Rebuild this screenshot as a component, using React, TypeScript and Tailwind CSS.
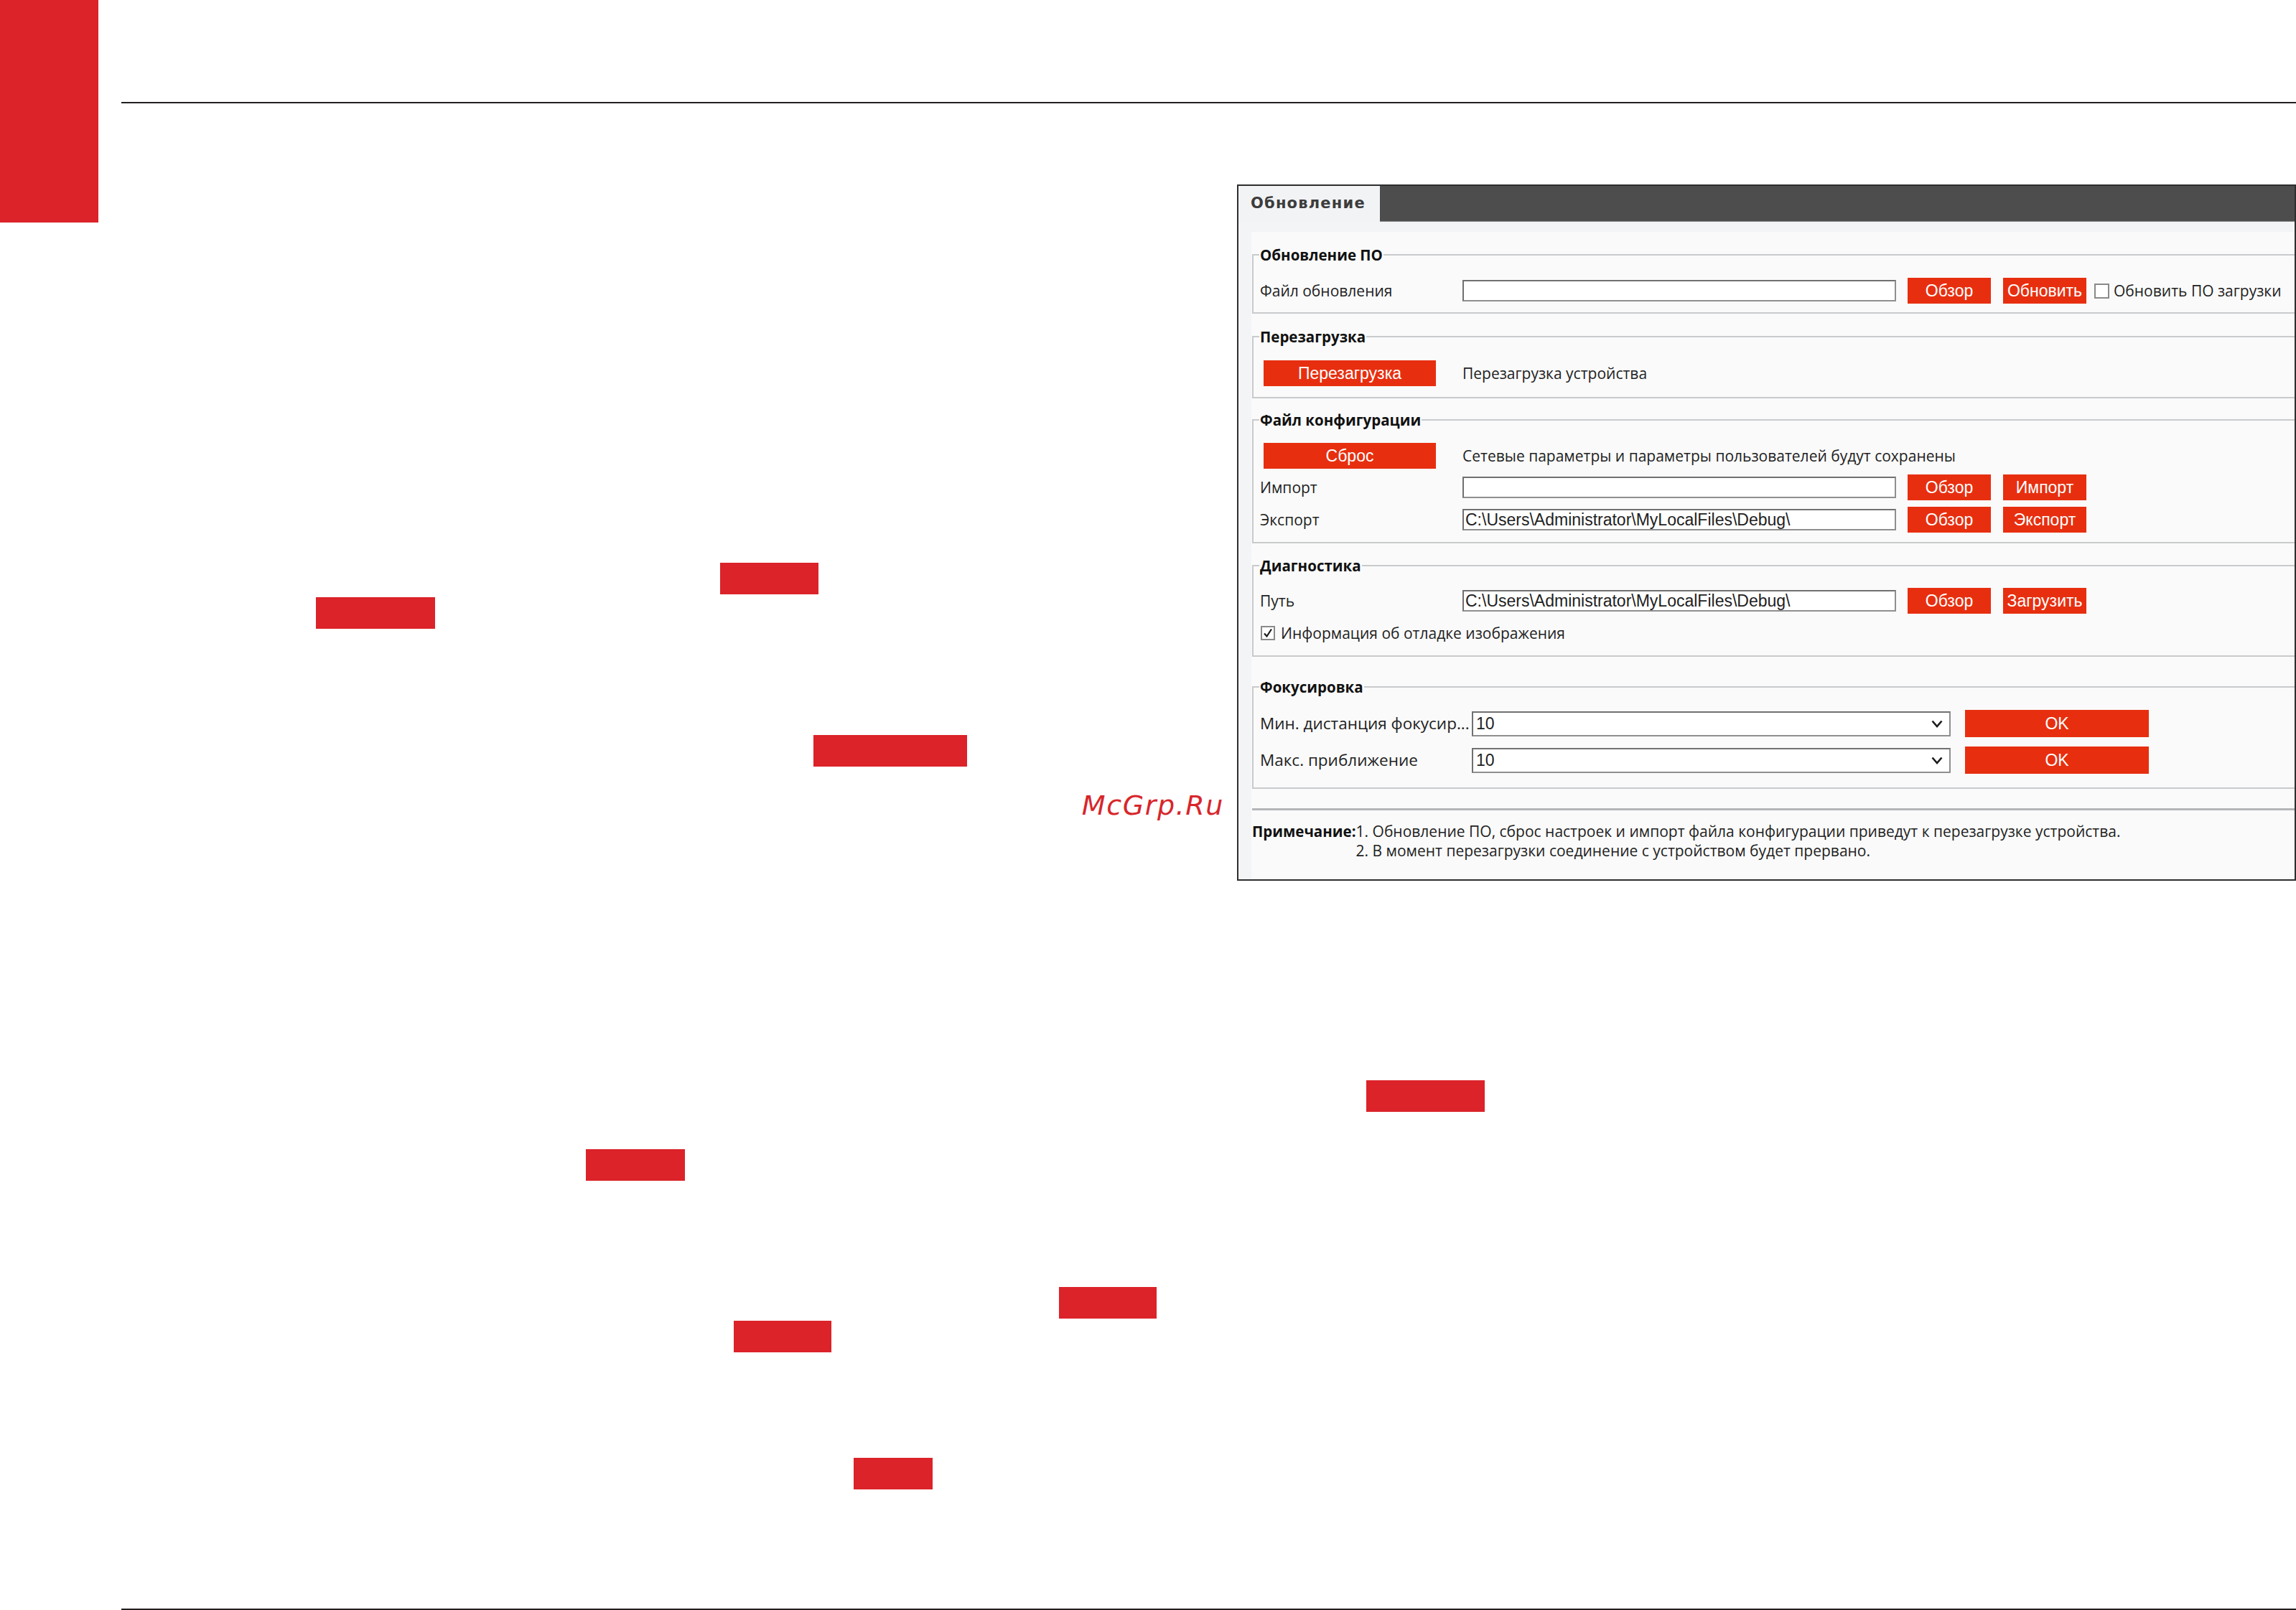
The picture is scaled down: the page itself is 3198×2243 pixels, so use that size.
import React, { FC, ReactNode } from "react";

const btn =
  "h-[36px] w-[116px] shrink-0 bg-[#e72f10] text-white text-[23px] leading-none flex items-center justify-center font-['Liberation_Sans',Arial,sans-serif]";
const input =
  "h-[30px] w-[604px] shrink-0 bg-white border-2 border-[#8f8f8f] border-t-[#707070] border-l-[#707070] px-[2px] flex items-center text-[23px] leading-none text-[#222] font-['Liberation_Sans',Arial,sans-serif] whitespace-nowrap overflow-hidden";
const label = "text-[21px] leading-none text-[#222] whitespace-nowrap";
const hl = "h-[44px] bg-[#db2329] shrink-0";

interface GroupProps {
  title: string;
  className?: string;
  bodyClass?: string;
  children: ReactNode;
}
const Group: FC<GroupProps> = ({ title, className = "", bodyClass = "", children }) => (
  <fieldset className={`border-2 border-r-0 border-[#c8cacc] ml-[1px] ${className}`}>
    <legend className="ml-[8px] px-[1px] text-[20.5px] leading-[26px] font-bold text-[#111]">
      {title}
    </legend>
    <div className={`pl-[9px] flex flex-col ${bodyClass}`}>{children}</div>
  </fieldset>
);

const Chevron = () => (
  <svg width="16" height="11" viewBox="0 0 16 11" className="shrink-0">
    <path d="M1.5 1.5 L8 9 L14.5 1.5" fill="none" stroke="#1a1a1a" strokeWidth="2.6" />
  </svg>
);

const Select: FC<{ value: string }> = ({ value }) => (
  <div className="h-[35px] w-[667px] shrink-0 bg-white border-2 border-[#8f8f8f] border-t-[#707070] border-l-[#707070] pl-[4px] pr-[9px] flex items-center justify-between">
    <span className="text-[23px] leading-none text-[#222] font-['Liberation_Sans',Arial,sans-serif]">
      {value}
    </span>
    <Chevron />
  </div>
);

const Panel = () => (
  <div className="mt-[113px] w-[1475px] h-[970px] shrink-0 border-2 border-[#2e2e2e] bg-[#f3f4f6] overflow-hidden flex flex-col">
    <div className="h-[50px] flex shrink-0">
      <div className="w-[197px] bg-[#f2f3f5] pl-[17px] flex items-center">
        <span className="text-[21px] font-bold tracking-[1.2px] text-[#3c3c3c] font-['DejaVu_Sans',Verdana,sans-serif]">
          Обновление
        </span>
      </div>
      <div className="flex-1 bg-[#4d4d4d] border-b border-[#8a8a8a]" />
    </div>

    <div className="flex-1 mt-[14px] ml-[18px] bg-[#fafafa] pt-[19px] flex flex-col">
      <Group title="Обновление ПО" bodyClass="pt-[19px] pb-[12px]">
        <div className="h-[36px] flex items-center">
          <span className={`${label} w-[282px] shrink-0`}>Файл обновления</span>
          <div className={input} />
          <div className={`${btn} ml-[16px]`}>Обзор</div>
          <div className={`${btn} ml-[17px]`}>Обновить</div>
          <div className="ml-[11px] w-[21px] h-[21px] shrink-0 bg-white border-2 border-[#8a8a8a]" />
          <span className={`${label} ml-[6px]`}>Обновить ПО загрузки</span>
        </div>
      </Group>

      <Group title="Перезагрузка" className="mt-[19px]" bodyClass="pt-[20px] pb-[15px]">
        <div className="h-[36px] flex items-center">
          <div className={`${btn} ml-[5px] w-[240px]`}>Перезагрузка</div>
          <span className={`${label} ml-[37px]`}>Перезагрузка устройства</span>
        </div>
      </Group>

      <Group title="Файл конфигурации" className="mt-[17px]" bodyClass="pt-[19px] pb-[13px]">
        <div className="h-[36px] flex items-center">
          <div className={`${btn} ml-[5px] w-[240px]`}>Сброс</div>
          <span className={`${label} ml-[37px]`}>
            Сетевые параметры и параметры пользователей будут сохранены
          </span>
        </div>
        <div className="mt-[8px] h-[36px] flex items-center">
          <span className={`${label} w-[282px] shrink-0`}>Импорт</span>
          <div className={input} />
          <div className={`${btn} ml-[16px]`}>Обзор</div>
          <div className={`${btn} ml-[17px]`}>Импорт</div>
        </div>
        <div className="mt-[9px] h-[36px] flex items-center">
          <span className={`${label} w-[282px] shrink-0`}>Экспорт</span>
          <div className={input}>C:\Users\Administrator\MyLocalFiles\Debug\</div>
          <div className={`${btn} ml-[16px]`}>Обзор</div>
          <div className={`${btn} ml-[17px]`}>Экспорт</div>
        </div>
      </Group>

      <Group title="Диагностика" className="mt-[18px]" bodyClass="pt-[18px] pb-[18px]">
        <div className="h-[36px] flex items-center">
          <span className={`${label} w-[282px] shrink-0`}>Путь</span>
          <div className={input}>C:\Users\Administrator\MyLocalFiles\Debug\</div>
          <div className={`${btn} ml-[16px]`}>Обзор</div>
          <div className={`${btn} ml-[17px]`}>Загрузить</div>
        </div>
        <div className="mt-[14px] h-[26px] flex items-center">
          <div className="ml-[1px] w-[20px] h-[20px] shrink-0 bg-white border-2 border-[#8a8a8a] flex items-center justify-center">
            <svg width="14" height="14" viewBox="0 0 14 14">
              <path d="M2 7.5 L5.5 11.5 L12 1.5" fill="none" stroke="#1a1a1a" strokeWidth="2.2" />
            </svg>
          </div>
          <span className={`${label} ml-[8px]`}>Информация об отладке изображения</span>
        </div>
      </Group>

      <Group title="Фокусировка" className="mt-[29px]" bodyClass="pt-[19px] pb-[19px]">
        <div className="h-[38px] flex items-center">
          <span className={`${label} text-[22.5px] w-[295px] shrink-0`}>Мин. дистанция фокусир...</span>
          <Select value="10" />
          <div className={`${btn} ml-[20px] w-[256px] h-[38px]`}>OK</div>
        </div>
        <div className="mt-[13px] h-[38px] flex items-center">
          <span className={`${label} text-[22.5px] w-[295px] shrink-0`}>Макс. приближение</span>
          <Select value="10" />
          <div className={`${btn} ml-[20px] w-[256px] h-[38px]`}>OK</div>
        </div>
      </Group>

      <div className="mt-[27px] ml-[1px] h-[3px] bg-[#b4b6b8]" />

      <div className="mt-[16px] ml-[1px] flex text-[21px] leading-[27px] text-[#222] whitespace-nowrap">
        <span className="font-bold text-[#111] text-[20.5px]">Примечание:</span>
        <div className="flex flex-col">
          <span>
            1. Обновление ПО, сброс настроек и импорт файла конфигурации приведут к перезагрузке устройства.
          </span>
          <span>2. В момент перезагрузки соединение с устройством будет прервано.</span>
        </div>
      </div>
    </div>
  </div>
);

export default function App() {
  return (
    <div className="w-[3198px] h-[2243px] bg-white flex overflow-hidden font-['Open_Sans',sans-serif]">
      <div className="w-[137px] h-[310px] shrink-0 bg-[#db2329]" />

      <div className="flex-1 min-w-0 flex flex-col pl-[32px]">
        <div className="mt-[142px] h-[2px] bg-[#231f20] shrink-0" />

        <div className="flex shrink-0">
          <div className="w-[1554px] shrink-0 flex flex-col">
            <div className={`${hl} mt-[640px] ml-[834px] w-[137px]`} />
            <div className={`${hl} mt-[4px] ml-[271px] w-[166px]`} />
            <div className={`${hl} mt-[148px] ml-[964px] w-[214px]`} />
            <div className="mt-[35px] pr-[18px] text-right text-[38px] leading-[38px] italic tracking-[1.6px] text-[#d7262b] font-['DejaVu_Sans',sans-serif]">
              McGrp.Ru
            </div>
          </div>
          <Panel />
        </div>

        <div className="flex-1 flex flex-col">
          <div className={`${hl} mt-[278px] ml-[1734px] w-[165px]`} />
          <div className={`${hl} mt-[52px] ml-[647px] w-[138px]`} />
          <div className={`${hl} mt-[148px] ml-[1306px] w-[136px]`} />
          <div className={`${hl} mt-[3px] ml-[853px] w-[136px]`} />
          <div className={`${hl} mt-[147px] ml-[1020px] w-[110px]`} />
        </div>

        <div className="h-[2px] bg-[#231f20] shrink-0" />
      </div>
    </div>
  );
}
